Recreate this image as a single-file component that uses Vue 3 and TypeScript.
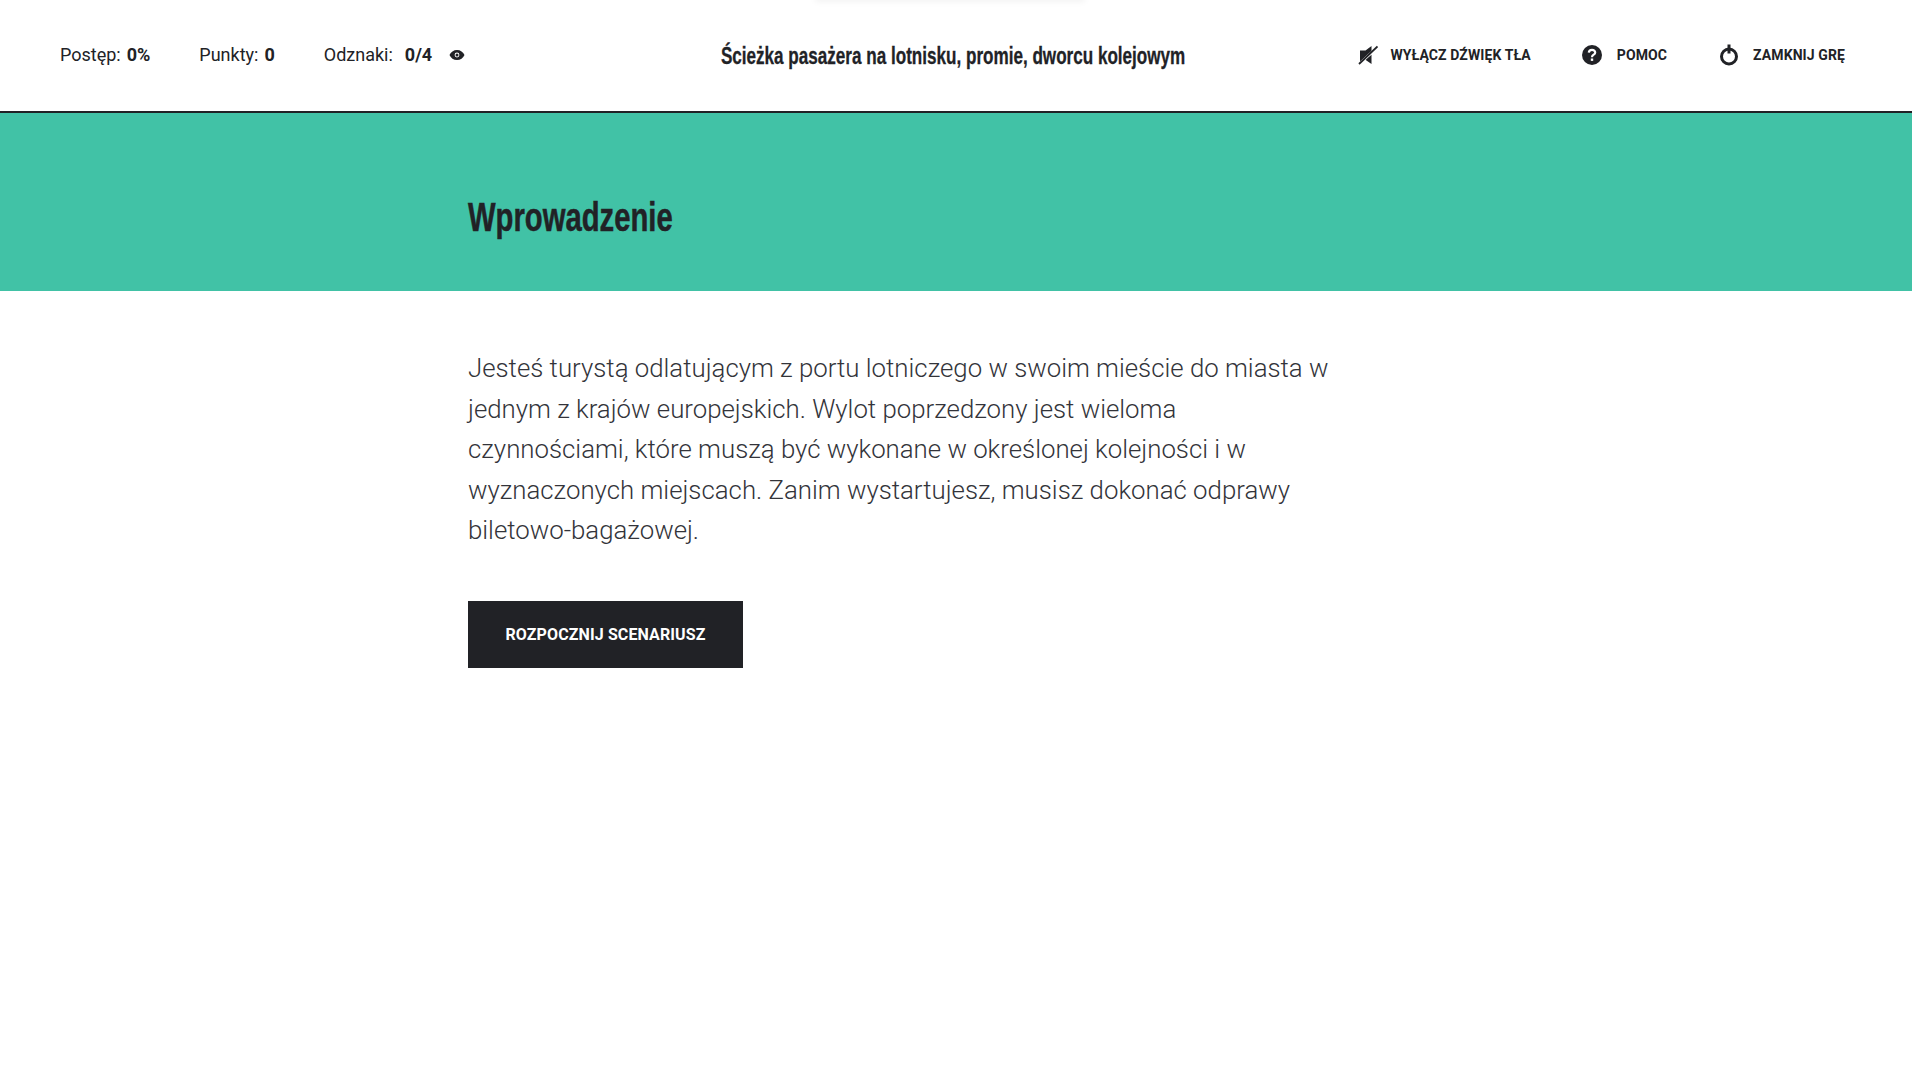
<script setup lang="ts">
const stats = [
  { label: 'Postęp:', value: '0%' },
  { label: 'Punkty:', value: '0' },
]
</script>

<template>
  <div class="page">
    <header class="topbar">
      <div class="drop-shadow"></div>
      <div class="stats">
        <div v-for="s in stats" :key="s.label" class="stat">
          <span>{{ s.label }}</span>
          <strong>{{ s.value }}</strong>
        </div>
        <div class="stat badges">
          <span>Odznaki:</span>
          <strong>0/4</strong>
          <svg class="eye" width="16" height="12" viewBox="0 0 16 12">
            <path fill="#212226" fill-rule="evenodd" d="M8 1C4.600 1 1.800 3 .5 6c1.300 3 4.100 5 7.500 5s6.200-2 7.500-5C14.200 3 11.400 1 8 1zm0 7.400a2.400 2.400 0 1 1 0-4.800 2.400 2.400 0 0 1 0 4.800zm0-.9a1.500 1.500 0 1 0 0-3 1.500 1.500 0 0 0 0 3z" />
          </svg>
        </div>
      </div>
      <div class="title-wrap">
        <span class="game-title">Ścieżka pasażera na lotnisku, promie, dworcu kolejowym</span>
      </div>
      <nav class="actions">
        <a class="action sound">
          <svg width="20" height="20" viewBox="0 0 20 20">
            <path fill="#212226" d="M2 5.500h5.500L13.500 1v5L3 16H2zM13.500 9.500V19l-6.500-4.500z" />
            <path stroke="#fff" stroke-width="2.600" d="M0 20 20 2" />
            <path stroke="#212226" stroke-width="1.800" d="M1 19 19.500 1.500" />
          </svg>
          <span>WYŁĄCZ DŹWIĘK TŁA</span>
        </a>
        <a class="action help">
          <svg width="20" height="20" viewBox="0 0 20 20">
            <circle cx="10" cy="10" r="10" fill="#212226" />
            <path fill="none" stroke="#fff" stroke-width="2.200" d="M6.800 7.600C6.900 5.700 8.200 4.800 10 4.800c1.900 0 3.200 1 3.200 2.600 0 2.400-3.200 2.200-3.200 4.800" />
            <rect x="8.800" y="13.500" width="2.400" height="2.400" fill="#fff" />
          </svg>
          <span>POMOC</span>
        </a>
        <a class="action quit">
          <svg width="20" height="22" viewBox="0 0 20 22">
            <circle cx="10" cy="12.500" r="7.500" fill="none" stroke="#212226" stroke-width="3" />
            <rect x="8.500" y="0.500" width="3" height="9" fill="#212226" />
          </svg>
          <span>ZAMKNIJ GRĘ</span>
        </a>
      </nav>
    </header>

    <section class="hero">
      <div class="column">
        <h1>Wprowadzenie</h1>
      </div>
    </section>

    <main class="column content">
      <p>Jesteś turystą odlatującym z portu lotniczego w swoim mieście do miasta w jednym z krajów europejskich. Wylot poprzedzony jest wieloma czynnościami, które muszą być wykonane w określonej kolejności i w wyznaczonych miejscach. Zanim wystartujesz, musisz dokonać odprawy biletowo-bagażowej.</p>
      <button class="start" type="button">ROZPOCZNIJ SCENARIUSZ</button>
    </main>
  </div>
</template>

<style scoped>
.page {
  min-height: 1080px;
  background: #fff;
  color: #212226;
  font-family: Roboto, "Liberation Sans", sans-serif;
}

.topbar {
  position: relative;
  height: 109px;
  display: flex;
  align-items: center;
  padding: 0 67px 2px 60px;
  border-bottom: 2px solid #212226;
  background: #fff;
}

.drop-shadow {
  position: absolute;
  top: -8px;
  left: 815px;
  width: 270px;
  height: 8px;
  box-shadow: 0 2px 6px rgba(0, 0, 0, 0.05);
}

.stats {
  display: flex;
  gap: 49px;
  font-size: 18px;
  width: 487px;
  flex: none;
}

.stat {
  display: flex;
  align-items: center;
  gap: 6px;
  white-space: nowrap;
}

.stat strong {
  font-weight: 700;
}

.badges {
  gap: 12px;
}

.eye {
  margin-left: 5px;
}

.title-wrap {
  flex: 1;
  display: flex;
  justify-content: center;
  padding-top: 2px;
}

/* no Oswald here, so squeeze a bold sans to the same width */
.game-title {
  display: inline-block;
  font-family: "Liberation Sans", sans-serif;
  font-weight: 700;
  font-size: 24px;
  white-space: nowrap;
  transform: scaleX(0.712);
  -webkit-text-stroke: 0.3px #212226;
}

.actions {
  display: flex;
  gap: 52px;
  flex: none;
}

.action {
  display: flex;
  align-items: center;
  gap: 14px;
  font-size: 14px;
  font-weight: 700;
  letter-spacing: 0.1px;
  white-space: nowrap;
}

.sound {
  gap: 12px;
}

.help {
  gap: 15px;
  margin-left: -1px;
}

.hero {
  height: 178px;
  background: #41c2a6;
  display: flex;
  align-items: center;
}

.column {
  width: 866px;
  margin-left: 468px;
}

.hero h1 {
  margin: 0;
  padding-top: 30px;
  font-family: "Liberation Sans", sans-serif;
  font-weight: 700;
  font-size: 40px;
  line-height: 60px;
  color: #212226;
  transform: scaleX(0.731);
  transform-origin: left center;
  -webkit-text-stroke: 0.5px #212226;
  white-space: nowrap;
}

.content {
  padding-top: 57px;
}

.content p {
  margin: 0 0 50px;
  font-size: 25.800px;
  line-height: 40.500px;
  font-weight: 300;
  color: #33343a;
}

.start {
  display: block;
  width: 275px;
  height: 67px;
  border: 0;
  background: #212226;
  color: #fff;
  font-family: Roboto, "Liberation Sans", sans-serif;
  font-size: 16px;
  font-weight: 700;
  letter-spacing: 0.11px;
}
</style>
